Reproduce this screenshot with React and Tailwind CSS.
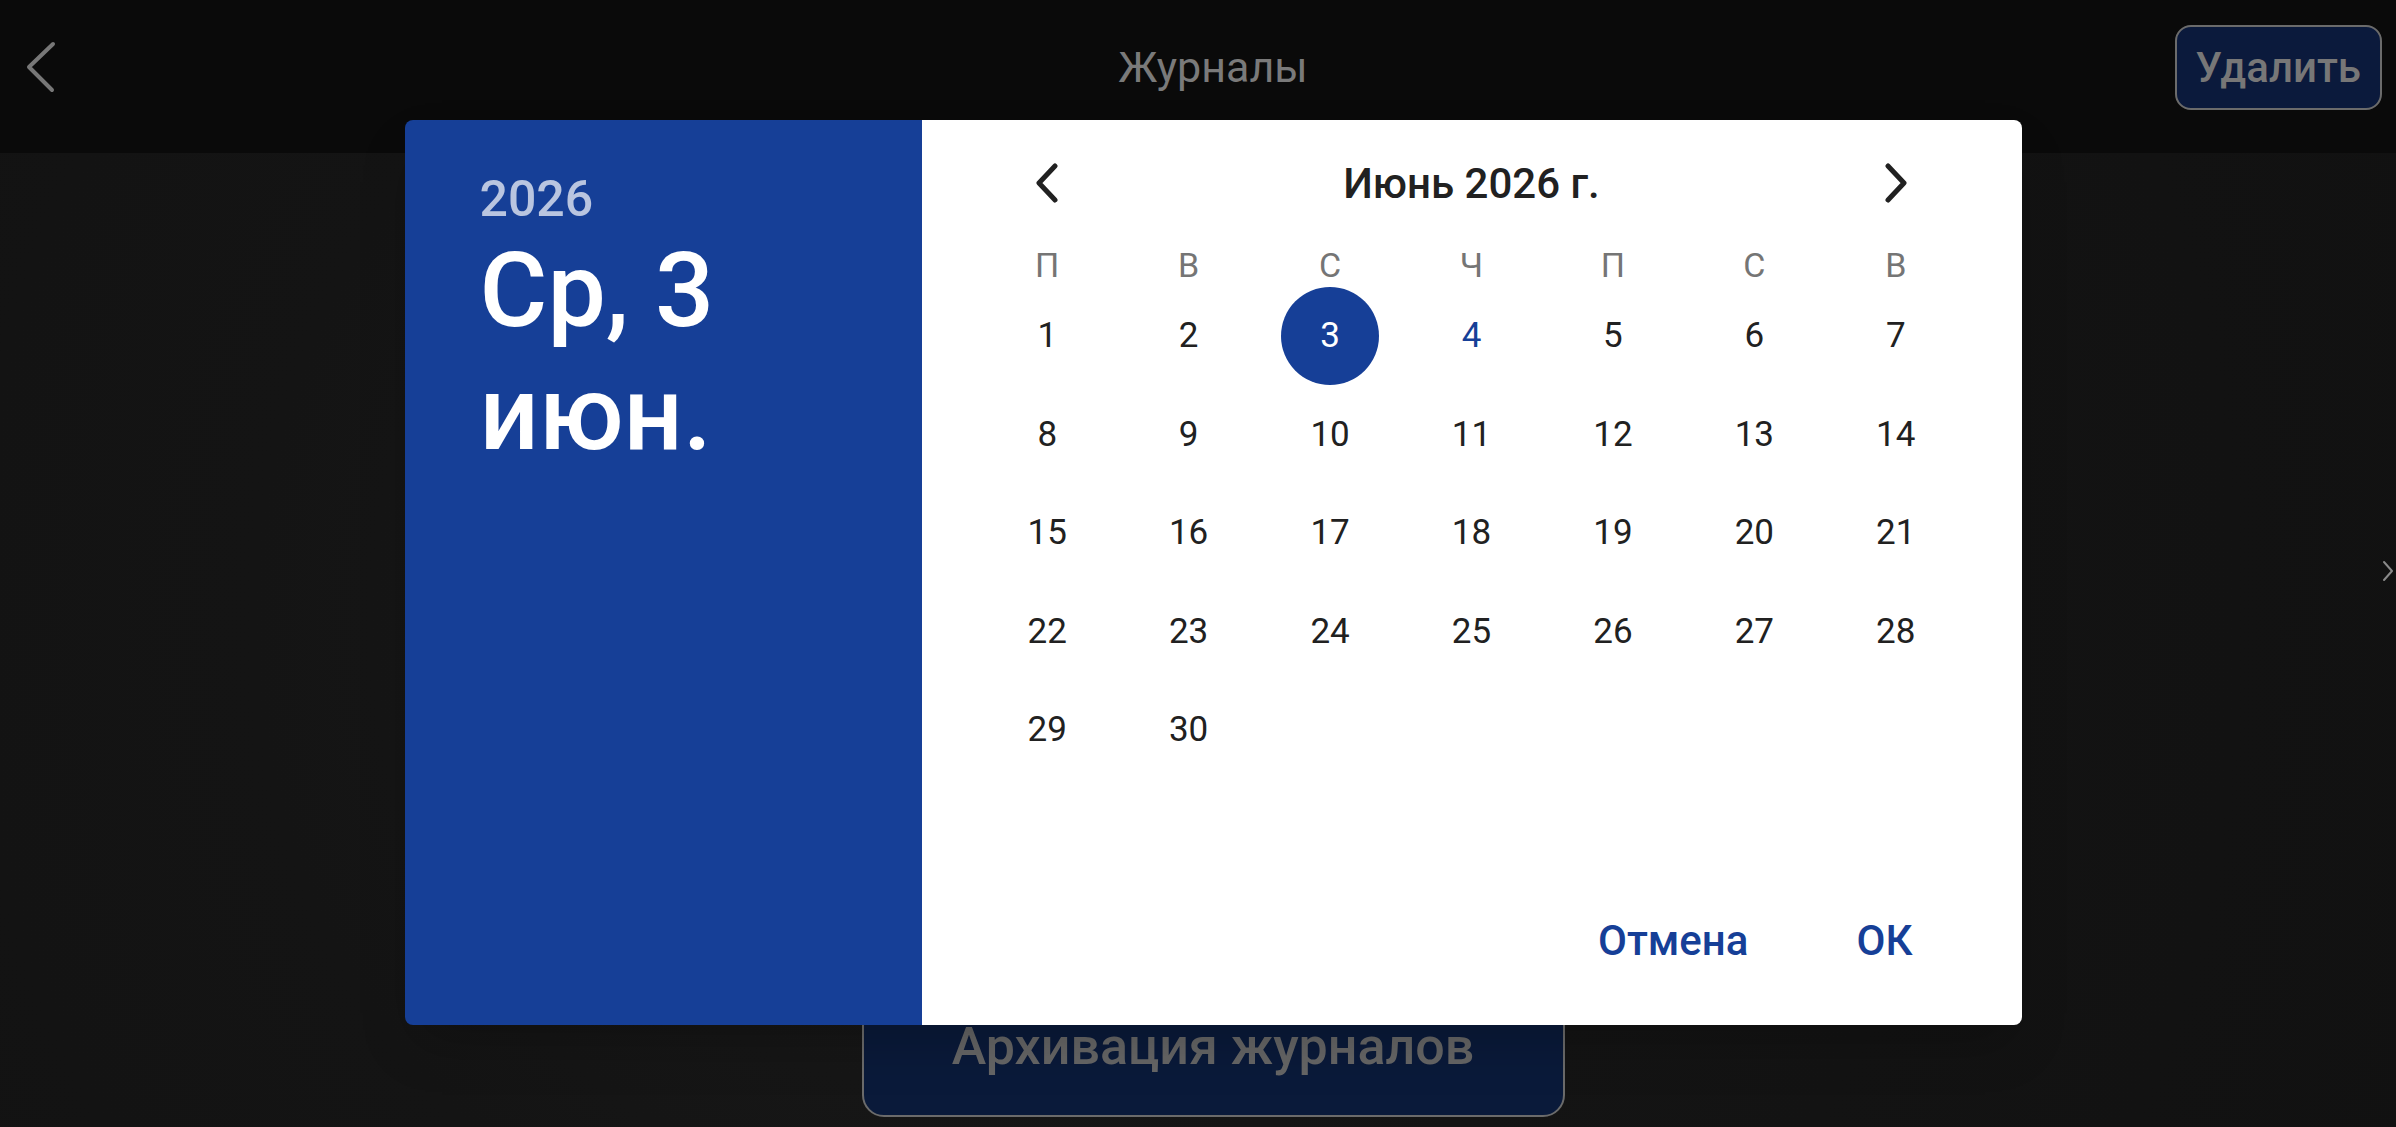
import React from 'react';

const BLUE = 'bg-[#163f97]';

const weekDays = ['П', 'В', 'С', 'Ч', 'П', 'С', 'В'];

const ChevronLeft = ({ className }) => (
  <svg viewBox="0 0 24 40" className={className} fill="none" stroke="currentColor" strokeWidth="5" strokeLinecap="round" strokeLinejoin="round">
    <polyline points="20,3 4,20 20,37" />
  </svg>
);

const ChevronRight = ({ className }) => (
  <svg viewBox="0 0 24 40" className={className} fill="none" stroke="currentColor" strokeWidth="5" strokeLinecap="round" strokeLinejoin="round">
    <polyline points="4,3 20,20 4,37" />
  </svg>
);

const DatePicker = () => {
  // June 2026 starts on Monday
  const days = Array.from({ length: 30 }, (_, i) => i + 1);
  const selected = 3;
  const today = 4;

  return (
    <div className="flex w-[1617px] h-[905px] rounded-lg overflow-hidden shadow-2xl">
      {/* Header panel */}
      <div className={`w-[517px] shrink-0 ${BLUE} pl-[75px] pt-[49px]`}>
        <div className="text-[50px] leading-[60px] font-medium text-white/70">2026</div>
        <div className="text-[104px] leading-[123px] font-medium text-white">
          <div>Ср, 3</div>
          <div>июн.</div>
        </div>
      </div>

      {/* Calendar */}
      <div className="flex-1 bg-white flex flex-col px-[55px] pt-[28px]">
        <div className="grid grid-cols-7 h-[70px] items-center">
          <div className="flex justify-center text-[#212121]">
            <ChevronLeft className="w-[24px] h-[40px]" />
          </div>
          <div className="col-span-5 text-center text-[42px] font-medium text-[#212121]">Июнь 2026 г.</div>
          <div className="flex justify-center text-[#212121]">
            <ChevronRight className="w-[24px] h-[40px]" />
          </div>
        </div>

        <div className="grid grid-cols-7 h-[44px] mt-[22px] items-center">
          {weekDays.map((d, i) => (
            <div key={i} className="text-center text-[34px] text-[#757575]">{d}</div>
          ))}
        </div>

        <div className="grid grid-cols-7 auto-rows-[98.6px] mt-[3px]">
          {days.map((d) => (
            <div key={d} className="flex items-center justify-center">
              {d === selected ? (
                <div className={`w-[98px] h-[98px] rounded-full ${BLUE} flex items-center justify-center text-[35px] text-white`}>
                  {d}
                </div>
              ) : (
                <span className={`text-[35px] ${d === today ? 'text-[#163f97]' : 'text-[#212121]'}`}>{d}</span>
              )}
            </div>
          ))}
        </div>

        <div className="flex-1" />

        <div className="flex justify-end items-center gap-[108px] h-[70px] pr-[54px] mb-[50px] text-[42px] font-medium text-[#163f97]">
          <button>Отмена</button>
          <button>ОК</button>
        </div>
      </div>
    </div>
  );
};

export default function App() {
  return (
    <div className="relative w-[2396px] h-[1127px] overflow-hidden flex flex-col font-[Roboto,sans-serif] bg-[radial-gradient(circle_at_40%_55%,#1a1a1a_0%,#141414_45%,#111111_100%)]">
      {/* Top bar */}
      <div className="h-[153px] shrink-0 bg-[#0a0a0a]">
        <div className="flex items-center h-[134px]">
          <div className="w-[219px] pl-[24px]">
            <svg viewBox="0 0 34 52" className="w-[34px] h-[52px]" fill="none" stroke="#777777" strokeWidth="4" strokeLinecap="round" strokeLinejoin="round">
              <polyline points="29,3 5,26 28,49" />
            </svg>
          </div>
          <div className="flex-1 text-center pl-[30px] text-[43px] text-[#7a7a7a]">Журналы</div>
          <div className="w-[219px] flex justify-end pr-[14px]">
            <button className="h-[85px] px-[19px] rounded-[16px] border-2 border-[#6b6b6b] bg-[#0b1a3c] text-[42px] font-medium text-[#777777]">
              Удалить
            </button>
          </div>
        </div>
      </div>

      {/* Page body */}
      <div className="flex-1 flex justify-center pl-[30px] pt-[823px]">
        <button className="w-[703px] h-[141px] rounded-[22px] border-2 border-[#6b6b6b] bg-[#0a1a3a] text-[52px] font-medium text-[#666666]">
          Архивация журналов
        </button>
      </div>

      {/* Side pager arrow */}
      <div className="absolute right-[2px] top-[560px] text-[#8a8a8a]">
        <svg viewBox="0 0 12 22" className="w-[12px] h-[22px]" fill="none" stroke="currentColor" strokeWidth="2" strokeLinecap="round" strokeLinejoin="round">
          <polyline points="2,2 10,11 2,20" />
        </svg>
      </div>

      {/* Dialog */}
      <div className="absolute inset-0 flex justify-center items-start pl-[30px] pt-[120px]">
        <DatePicker />
      </div>
    </div>
  );
}
